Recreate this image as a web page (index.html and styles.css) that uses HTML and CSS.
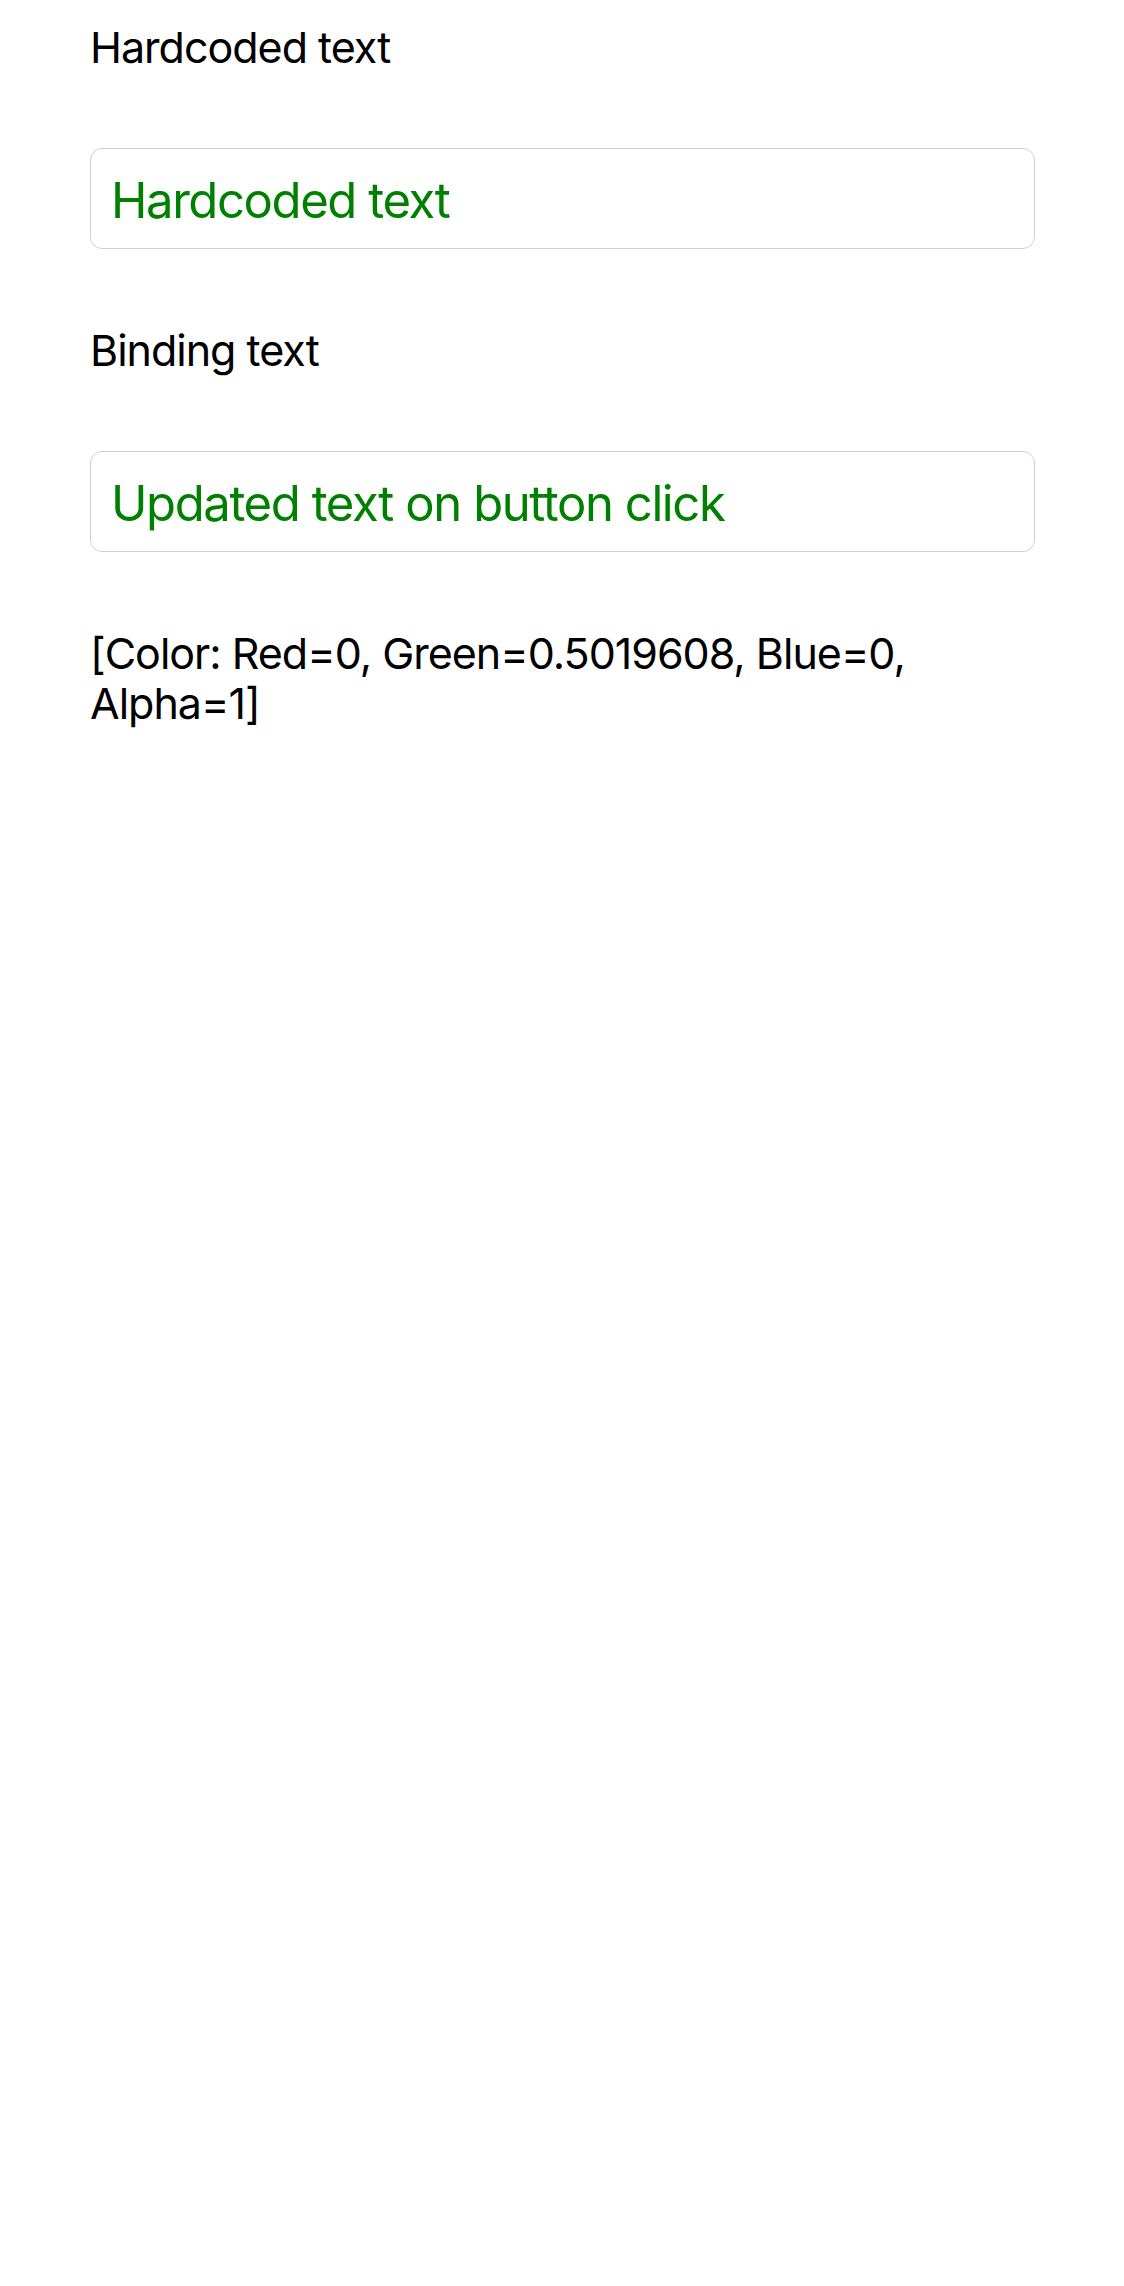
FILE: index.html
```html
<!DOCTYPE html>
<html lang="en">
<head>
<meta charset="utf-8">
<title>Text demo</title>
<link rel="stylesheet" href="styles.css">
</head>
<body>
<main class="page">
  <p class="label">Hardcoded text</p>
  <div class="entry">Hardcoded text</div>
  <p class="label">Binding text</p>
  <div class="entry">Updated text on button click</div>
  <p class="label">[Color: Red=0, Green=0.5019608, Blue=0, Alpha=1]</p>
</main>
</body>
</html>
```

FILE: styles.css
```css
html, body {
  margin: 0;
  padding: 0;
  background: #ffffff;
}

.page {
  display: flex;
  flex-direction: column;
  gap: 76px;
  padding: 22px 89px 0 90px;
  font-family: "Inter", "Noto Sans", sans-serif;
}

.label {
  margin: 0;
  font-size: 43px;
  line-height: 50px;
  color: #000000;
  letter-spacing: -1px;
}

.entry {
  box-sizing: border-box;
  height: 101px;
  padding: 4px 20px 0 20px;
  border: 1px solid #d0d0d0;
  border-radius: 12px;
  font-size: 49px;
  line-height: 95px;
  color: #008000;
  letter-spacing: -1.4px;
  white-space: nowrap;
  overflow: hidden;
}
```
